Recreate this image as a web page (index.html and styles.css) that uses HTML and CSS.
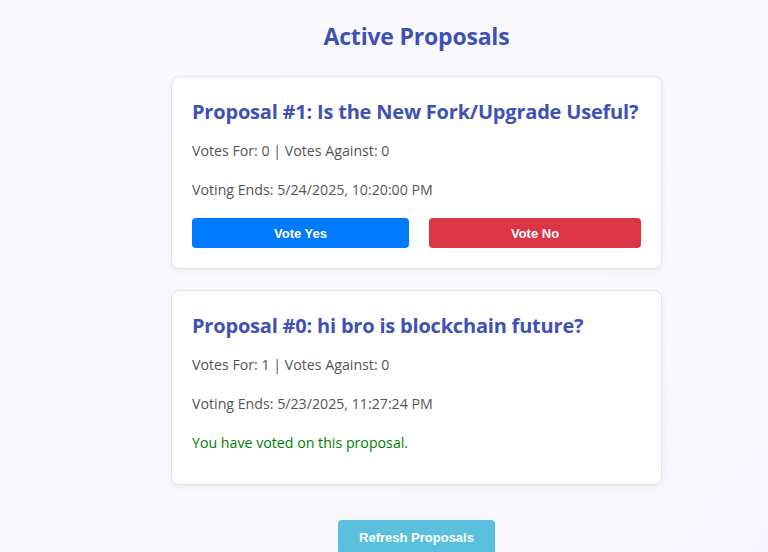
FILE: index.html
```html
<!DOCTYPE html>
<html>
<head>
<meta charset="utf-8">
<link rel="stylesheet" href="styles.css">
</head>
<body>
<main class="page">
  <h1 class="page-title">Active Proposals</h1>
  <section class="card">
    <h3 class="card-title">Proposal #1: Is the New Fork/Upgrade Useful?</h3>
    <p class="meta">Votes For: 0 | Votes Against: 0</p>
    <p class="meta">Voting Ends: 5/24/2025, 10:20:00 PM</p>
    <div class="actions">
      <button class="btn btn-yes">Vote Yes</button>
      <button class="btn btn-no">Vote No</button>
    </div>
  </section>
  <section class="card">
    <h3 class="card-title">Proposal #0: hi bro is blockchain future?</h3>
    <p class="meta">Votes For: 1 | Votes Against: 0</p>
    <p class="meta">Voting Ends: 5/23/2025, 11:27:24 PM</p>
    <p class="voted">You have voted on this proposal.</p>
  </section>
  <div class="refresh-row">
    <button class="btn btn-refresh">Refresh Proposals</button>
  </div>
</main>
</body>
</html>
```

FILE: styles.css
```css
html, body {
  margin: 0;
  padding: 0;
  height: 100%;
}
body {
  background: linear-gradient(135deg, #fafafd 0%, #f7f6fc 100%);
  font-family: "Open Sans", "Noto Sans", sans-serif;
  overflow: hidden;
}
.page {
  width: 491px;
  margin-left: 171px;
  padding-top: 21px;
}
.page-title {
  margin: 0 0 25px;
  text-align: center;
  font-size: 23px;
  line-height: 30px;
  font-weight: 700;
  color: #3f51b5;
  letter-spacing: -0.2px;
}
.card {
  background: #fff;
  border: 1px solid #e1e1e6;
  border-radius: 8px;
  box-shadow: 0 2px 6px rgba(0,0,0,0.06);
  padding: 21px 20px 20px;
  margin-bottom: 21px;
}
.card-title {
  margin: 0 0 14px;
  font-size: 20px;
  line-height: 28px;
  font-weight: 700;
  color: #3f51b5;
  letter-spacing: -0.2px;
  white-space: nowrap;
}
.meta {
  margin: 0 0 17px;
  font-size: 14.2px;
  line-height: 22px;
  color: #555;
}
.voted {
  margin: 0 0 10px;
  font-size: 14.2px;
  line-height: 22px;
  color: #008000;
}
.actions {
  display: flex;
  gap: 20px;
}
.btn {
  border: none;
  border-radius: 4px;
  color: #fff;
  font-family: "Liberation Sans", Arial, sans-serif;
  font-weight: 700;
  font-size: 13px;
  height: 30px;
  cursor: pointer;
}
.btn-yes {
  width: 217px;
  background: #007bff;
}
.btn-no {
  flex: 1;
  background: #dc3545;
}
.refresh-row {
  display: flex;
  justify-content: center;
  padding-top: 14px;
}
.btn-refresh {
  background: #5bc0de;
  width: 157px;
  height: 34px;
}
```
